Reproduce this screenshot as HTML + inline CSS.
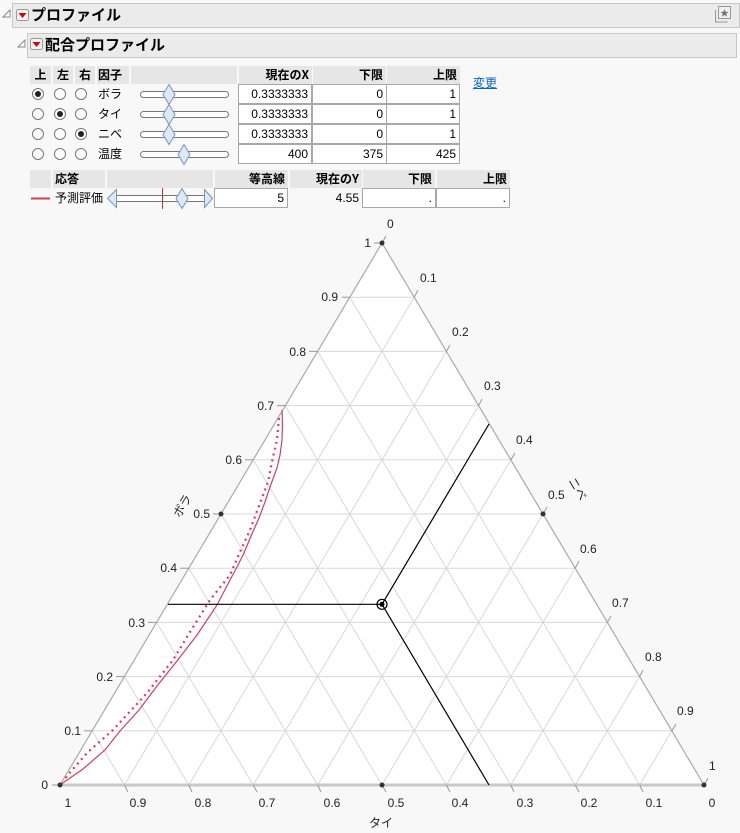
<!DOCTYPE html>
<html><head><meta charset="utf-8">
<style>
*{margin:0;padding:0;box-sizing:border-box}
body{width:740px;height:833px;background:#f8f8f8;position:relative;overflow:hidden;font-family:"Liberation Sans","Noto Sans CJK JP",sans-serif;font-size:12px;color:#000}
.a{position:absolute}
.hdr{background:#ebebeb;border:1px solid #c8c8c8}
.title{font-weight:bold;font-size:15px;font-family:"Noto Sans CJK JP",sans-serif}
.th{position:absolute;background:#e6e6e6;height:18px;line-height:18px;font-weight:bold;font-size:12px;font-family:"Noto Sans CJK JP",sans-serif}
.r{text-align:right;padding-right:3px}
.c{text-align:center}
.in{position:absolute;background:#fff;border:1px solid #a8a8a8;height:20px;line-height:18px;text-align:right;padding-right:3px;font-size:12px}
.rad{position:absolute;width:12px;height:12px;border:1px solid #777;border-radius:50%;background:#fff}
.rad.on::after{content:"";position:absolute;left:2px;top:2px;width:6px;height:6px;border-radius:50%;background:#222}
.lab{position:absolute;font-size:12px;font-family:"Noto Sans CJK JP",sans-serif;line-height:20px}
</style></head><body>
<div class="a hdr" style="left:12px;top:3px;width:728px;height:25px"></div>
<div class="a hdr" style="left:27px;top:33px;width:710px;height:25px"></div>
<svg class="a" style="left:0;top:0" width="740" height="60">
<polygon points="3,17 10,17 10,10" fill="#fff" stroke="#888" stroke-width="1"/>
<rect x="16.5" y="9.5" width="12" height="11" rx="2" fill="#f4f4f4" stroke="#999"/>
<polygon points="18.5,13 26.5,13 22.5,18" fill="#d00"/>
<polygon points="18,47 25,47 25,40" fill="#fff" stroke="#888" stroke-width="1"/>
<rect x="30.5" y="38.5" width="12" height="11" rx="2" fill="#f4f4f4" stroke="#999"/>
<polygon points="32.5,42 40.5,42 36.5,47" fill="#d00"/>
<rect x="718.5" y="6.5" width="12" height="12" fill="#f0f0f0" stroke="#999"/>
<path d="M715.5 10v12h12" fill="none" stroke="#999"/>
<polygon points="724.5,9 725.6,11.8 728.5,12 726.3,13.8 727,16.6 724.5,15 722,16.6 722.7,13.8 720.5,12 723.4,11.8" fill="#777"/>
</svg>
<div class="a title" style="left:31px;top:3px;line-height:24px">プロファイル</div>
<div class="a title" style="left:45px;top:33px;line-height:24px">配合プロファイル</div>

<div class="th c" style="left:30px;top:66px;width:21px">上</div>
<div class="th c" style="left:53px;top:66px;width:20px">左</div>
<div class="th c" style="left:75px;top:66px;width:20px">右</div>
<div class="th" style="left:97px;top:66px;width:32px;padding-left:1px">因子</div>
<div class="th" style="left:131px;top:66px;width:106px"></div>
<div class="th r" style="left:239px;top:66px;width:73px">現在のX</div>
<div class="th r" style="left:313px;top:66px;width:73px">下限</div>
<div class="th r" style="left:387px;top:66px;width:73px">上限</div>
<div class="a" style="left:473px;top:74px;color:#0a64c8;text-decoration:underline;font-family:'Noto Sans CJK JP',sans-serif;font-size:12px">変更</div>

<div class="rad on" style="left:32px;top:88px"></div><div class="rad" style="left:54px;top:88px"></div><div class="rad" style="left:75px;top:88px"></div>
<div class="rad" style="left:32px;top:108px"></div><div class="rad on" style="left:54px;top:108px"></div><div class="rad" style="left:75px;top:108px"></div>
<div class="rad" style="left:32px;top:128px"></div><div class="rad" style="left:54px;top:128px"></div><div class="rad on" style="left:75px;top:128px"></div>
<div class="rad" style="left:32px;top:148px"></div><div class="rad" style="left:54px;top:148px"></div><div class="rad" style="left:75px;top:148px"></div>
<div class="lab" style="left:98px;top:84px">ボラ</div>
<div class="lab" style="left:98px;top:104px">タイ</div>
<div class="lab" style="left:98px;top:124px">ニベ</div>
<div class="lab" style="left:98px;top:144px">温度</div>

<div class="in" style="left:238px;top:84px;width:74px">0.3333333</div>
<div class="in" style="left:312px;top:84px;width:75px">0</div>
<div class="in" style="left:386px;top:84px;width:74px">1</div>
<div class="in" style="left:238px;top:104px;width:74px">0.3333333</div>
<div class="in" style="left:312px;top:104px;width:75px">0</div>
<div class="in" style="left:386px;top:104px;width:74px">1</div>
<div class="in" style="left:238px;top:124px;width:74px">0.3333333</div>
<div class="in" style="left:312px;top:124px;width:75px">0</div>
<div class="in" style="left:386px;top:124px;width:74px">1</div>
<div class="in" style="left:238px;top:144px;width:74px">400</div>
<div class="in" style="left:312px;top:144px;width:75px">375</div>
<div class="in" style="left:386px;top:144px;width:74px">425</div>

<div class="th" style="left:30px;top:170px;width:21px"></div>
<div class="th" style="left:53px;top:170px;width:52px;padding-left:2px">応答</div>
<div class="th" style="left:107px;top:170px;width:106px"></div>
<div class="th r" style="left:215px;top:170px;width:73px">等高線</div>
<div class="th r" style="left:290px;top:170px;width:72px">現在のY</div>
<div class="th r" style="left:363px;top:170px;width:72px">下限</div>
<div class="th r" style="left:437px;top:170px;width:73px">上限</div>
<div class="lab" style="left:55px;top:188px">予測評価</div>
<div class="in" style="left:214px;top:188px;width:74px">5</div>
<div class="a" style="left:300px;top:188px;width:59px;text-align:right;line-height:20px">4.55</div>
<div class="in" style="left:362px;top:188px;width:74px">.</div>
<div class="in" style="left:436px;top:188px;width:74px">.</div>

<svg class="a" style="left:0;top:0" width="740" height="215">
<g stroke="#777" fill="#fff" stroke-width="1">
<rect x="140.5" y="91.5" width="88" height="6" rx="3"/>
<rect x="140.5" y="111.5" width="88" height="6" rx="3"/>
<rect x="140.5" y="131.5" width="88" height="6" rx="3"/>
<rect x="140.5" y="151.5" width="88" height="6" rx="3"/>
</g>
<g fill="#dce8f6" stroke="#7a95b8">
<polygon points="169,84.5 175,94.5 169,104.5 163,94.5"/>
<polygon points="169,104.5 175,114.5 169,124.5 163,114.5"/>
<polygon points="169,124.5 175,134.5 169,144.5 163,134.5"/>
<polygon points="184,144.5 190,154.5 184,164.5 178,154.5"/>
</g>
<line x1="31" y1="198.5" x2="50" y2="198.5" stroke="#d0405a" stroke-width="2"/>
<rect x="116.5" y="195.5" width="88" height="6" fill="#fff" stroke="#777"/>
<g fill="#dce8f6" stroke="#7a95b8">
<polygon points="107.5,198.5 116.5,189.5 116.5,207.5"/>
<polygon points="212.5,198.5 204.5,189.5 204.5,207.5"/>
<polygon points="182,188.5 188,198.5 182,208.5 176,198.5"/>
</g>
<line x1="162.5" y1="188" x2="162.5" y2="209" stroke="#d0303a"/>
</svg>

<svg class="a" style="left:0;top:0" width="740" height="833" font-family="Liberation Sans,sans-serif" font-size="12">
<polygon points="382,243 60,785 704,785" fill="#fff"/>
<g stroke="#d8d8d8" stroke-width="1">
<line x1="92.2" y1="730.8" x2="671.8" y2="730.8"/>
<line x1="124.4" y1="676.6" x2="639.6" y2="676.6"/>
<line x1="156.6" y1="622.4" x2="607.4" y2="622.4"/>
<line x1="188.8" y1="568.2" x2="575.2" y2="568.2"/>
<line x1="221" y1="514" x2="543" y2="514"/>
<line x1="253.2" y1="459.8" x2="510.8" y2="459.8"/>
<line x1="285.4" y1="405.6" x2="478.6" y2="405.6"/>
<line x1="317.6" y1="351.4" x2="446.4" y2="351.4"/>
<line x1="349.8" y1="297.2" x2="414.2" y2="297.2"/>
<line x1="124.4" y1="785" x2="414.2" y2="297.2"/>
<line x1="188.8" y1="785" x2="446.4" y2="351.4"/>
<line x1="253.2" y1="785" x2="478.6" y2="405.6"/>
<line x1="317.6" y1="785" x2="510.8" y2="459.8"/>
<line x1="382" y1="785" x2="543" y2="514"/>
<line x1="446.4" y1="785" x2="575.2" y2="568.2"/>
<line x1="510.8" y1="785" x2="607.4" y2="622.4"/>
<line x1="575.2" y1="785" x2="639.6" y2="676.6"/>
<line x1="639.6" y1="785" x2="671.8" y2="730.8"/>
<line x1="639.6" y1="785" x2="349.8" y2="297.2"/>
<line x1="575.2" y1="785" x2="317.6" y2="351.4"/>
<line x1="510.8" y1="785" x2="285.4" y2="405.6"/>
<line x1="446.4" y1="785" x2="253.2" y2="459.8"/>
<line x1="382" y1="785" x2="221" y2="514"/>
<line x1="317.6" y1="785" x2="188.8" y2="568.2"/>
<line x1="253.2" y1="785" x2="156.6" y2="622.4"/>
<line x1="188.8" y1="785" x2="124.4" y2="676.6"/>
<line x1="124.4" y1="785" x2="92.2" y2="730.8"/>
</g>
<g stroke="#aaa" stroke-width="1.2" fill="none">
<polyline points="382,243 60,785 704,785 382,243"/>
</g>
<line x1="60" y1="785" x2="704" y2="785" stroke="#c8c8c8" stroke-width="3"/>
<g stroke="#999">
<line x1="52" y1="785" x2="60" y2="785"/><line x1="84" y1="730.8" x2="92.2" y2="730.8"/><line x1="116" y1="676.6" x2="124.4" y2="676.6"/><line x1="148" y1="622.4" x2="156.6" y2="622.4"/><line x1="180" y1="568.2" x2="188.8" y2="568.2"/><line x1="213" y1="514" x2="221" y2="514"/><line x1="245" y1="459.8" x2="253.2" y2="459.8"/><line x1="277" y1="405.6" x2="285.4" y2="405.6"/><line x1="309" y1="351.4" x2="317.6" y2="351.4"/><line x1="342" y1="297.2" x2="349.8" y2="297.2"/><line x1="374" y1="243" x2="382" y2="243"/>
<line x1="382" y1="243" x2="386" y2="236"/><line x1="414.2" y1="297.2" x2="418" y2="290"/><line x1="446.4" y1="351.4" x2="450" y2="345"/><line x1="478.6" y1="405.6" x2="482" y2="399"/><line x1="510.8" y1="459.8" x2="515" y2="453"/><line x1="543" y1="514" x2="547" y2="507"/><line x1="575.2" y1="568.2" x2="579" y2="561"/><line x1="607.4" y1="622.4" x2="611" y2="616"/><line x1="639.6" y1="676.6" x2="643" y2="670"/><line x1="671.8" y1="730.8" x2="676" y2="724"/><line x1="704" y1="785" x2="708" y2="778"/>
<line x1="124.4" y1="785" x2="128" y2="792"/><line x1="188.8" y1="785" x2="192" y2="792"/><line x1="253.2" y1="785" x2="257" y2="792"/><line x1="317.6" y1="785" x2="321" y2="792"/><line x1="382" y1="785" x2="386" y2="792"/><line x1="446.4" y1="785" x2="450" y2="792"/><line x1="510.8" y1="785" x2="514" y2="792"/><line x1="575.2" y1="785" x2="579" y2="792"/><line x1="639.6" y1="785" x2="643" y2="792"/>
</g>
<g text-anchor="end" fill="#222">
<text x="48" y="789">0</text><text x="81" y="735">0.1</text><text x="113" y="681">0.2</text><text x="145" y="627">0.3</text><text x="177" y="572">0.4</text><text x="210" y="518">0.5</text><text x="242" y="464">0.6</text><text x="274" y="410">0.7</text><text x="306" y="356">0.8</text><text x="338" y="301">0.9</text><text x="371" y="247">1</text>
</g>
<g fill="#222">
<text x="387" y="228">0</text><text x="420" y="282">0.1</text><text x="452" y="336">0.2</text><text x="484" y="390">0.3</text><text x="516" y="444">0.4</text><text x="548" y="499">0.5</text><text x="580" y="553">0.6</text><text x="612" y="607">0.7</text><text x="645" y="661">0.8</text><text x="677" y="715">0.9</text><text x="709" y="770">1</text>
</g>
<g fill="#222" text-anchor="middle">
<text x="68" y="807">1</text><text x="138" y="807">0.9</text><text x="203" y="807">0.8</text><text x="267" y="807">0.7</text><text x="332" y="807">0.6</text><text x="396" y="807">0.5</text><text x="460" y="807">0.4</text><text x="525" y="807">0.3</text><text x="589" y="807">0.2</text><text x="654" y="807">0.1</text><text x="712" y="807">0</text>
</g>
<g font-family="Noto Sans CJK JP,sans-serif" font-size="12" fill="#222">
<text x="0" y="0" transform="translate(186,508) rotate(-59)" text-anchor="middle">ボラ</text>
<text x="0" y="0" transform="translate(574,491) rotate(59)" text-anchor="middle">ニベ</text>
<text x="381" y="827" text-anchor="middle">タイ</text>
</g>
<polyline fill="none" stroke="#d0405a" stroke-width="1.2" points="282,410 282.5,425 282,440 280,455 277,468 270,487 265,502 259,518 251,536 244,553 237,567 230,580 217,605 207,620 197,635 177,661 157,686 139,710 120,731 105,750 83,769 60,785"/>
<polyline fill="none" stroke="#d0405a" stroke-width="2.2" stroke-dasharray="2 4" points="279,418 277,440 273,457 268,482 260,503 250,530 240,552 230,575 210,600 190,632 173,660 147,693 113,730 88,752 72,770 64,780"/>
<g stroke="#000" stroke-width="1.2" fill="none">
<line x1="168" y1="604.3" x2="382" y2="604.3"/>
<line x1="382" y1="604.3" x2="489" y2="424"/>
<line x1="382" y1="604.3" x2="489" y2="785"/>
<circle cx="382" cy="604.3" r="5"/>
</g>
<circle cx="382" cy="604.3" r="2.5" fill="#000"/>
<g fill="#333">
<circle cx="382" cy="243" r="2.5"/><circle cx="60" cy="785" r="2.5"/><circle cx="704" cy="785" r="2.5"/>
<circle cx="221" cy="514" r="2.5"/><circle cx="543" cy="514" r="2.5"/><circle cx="382" cy="785" r="2.5"/>
</g>
</svg>
</body></html>
